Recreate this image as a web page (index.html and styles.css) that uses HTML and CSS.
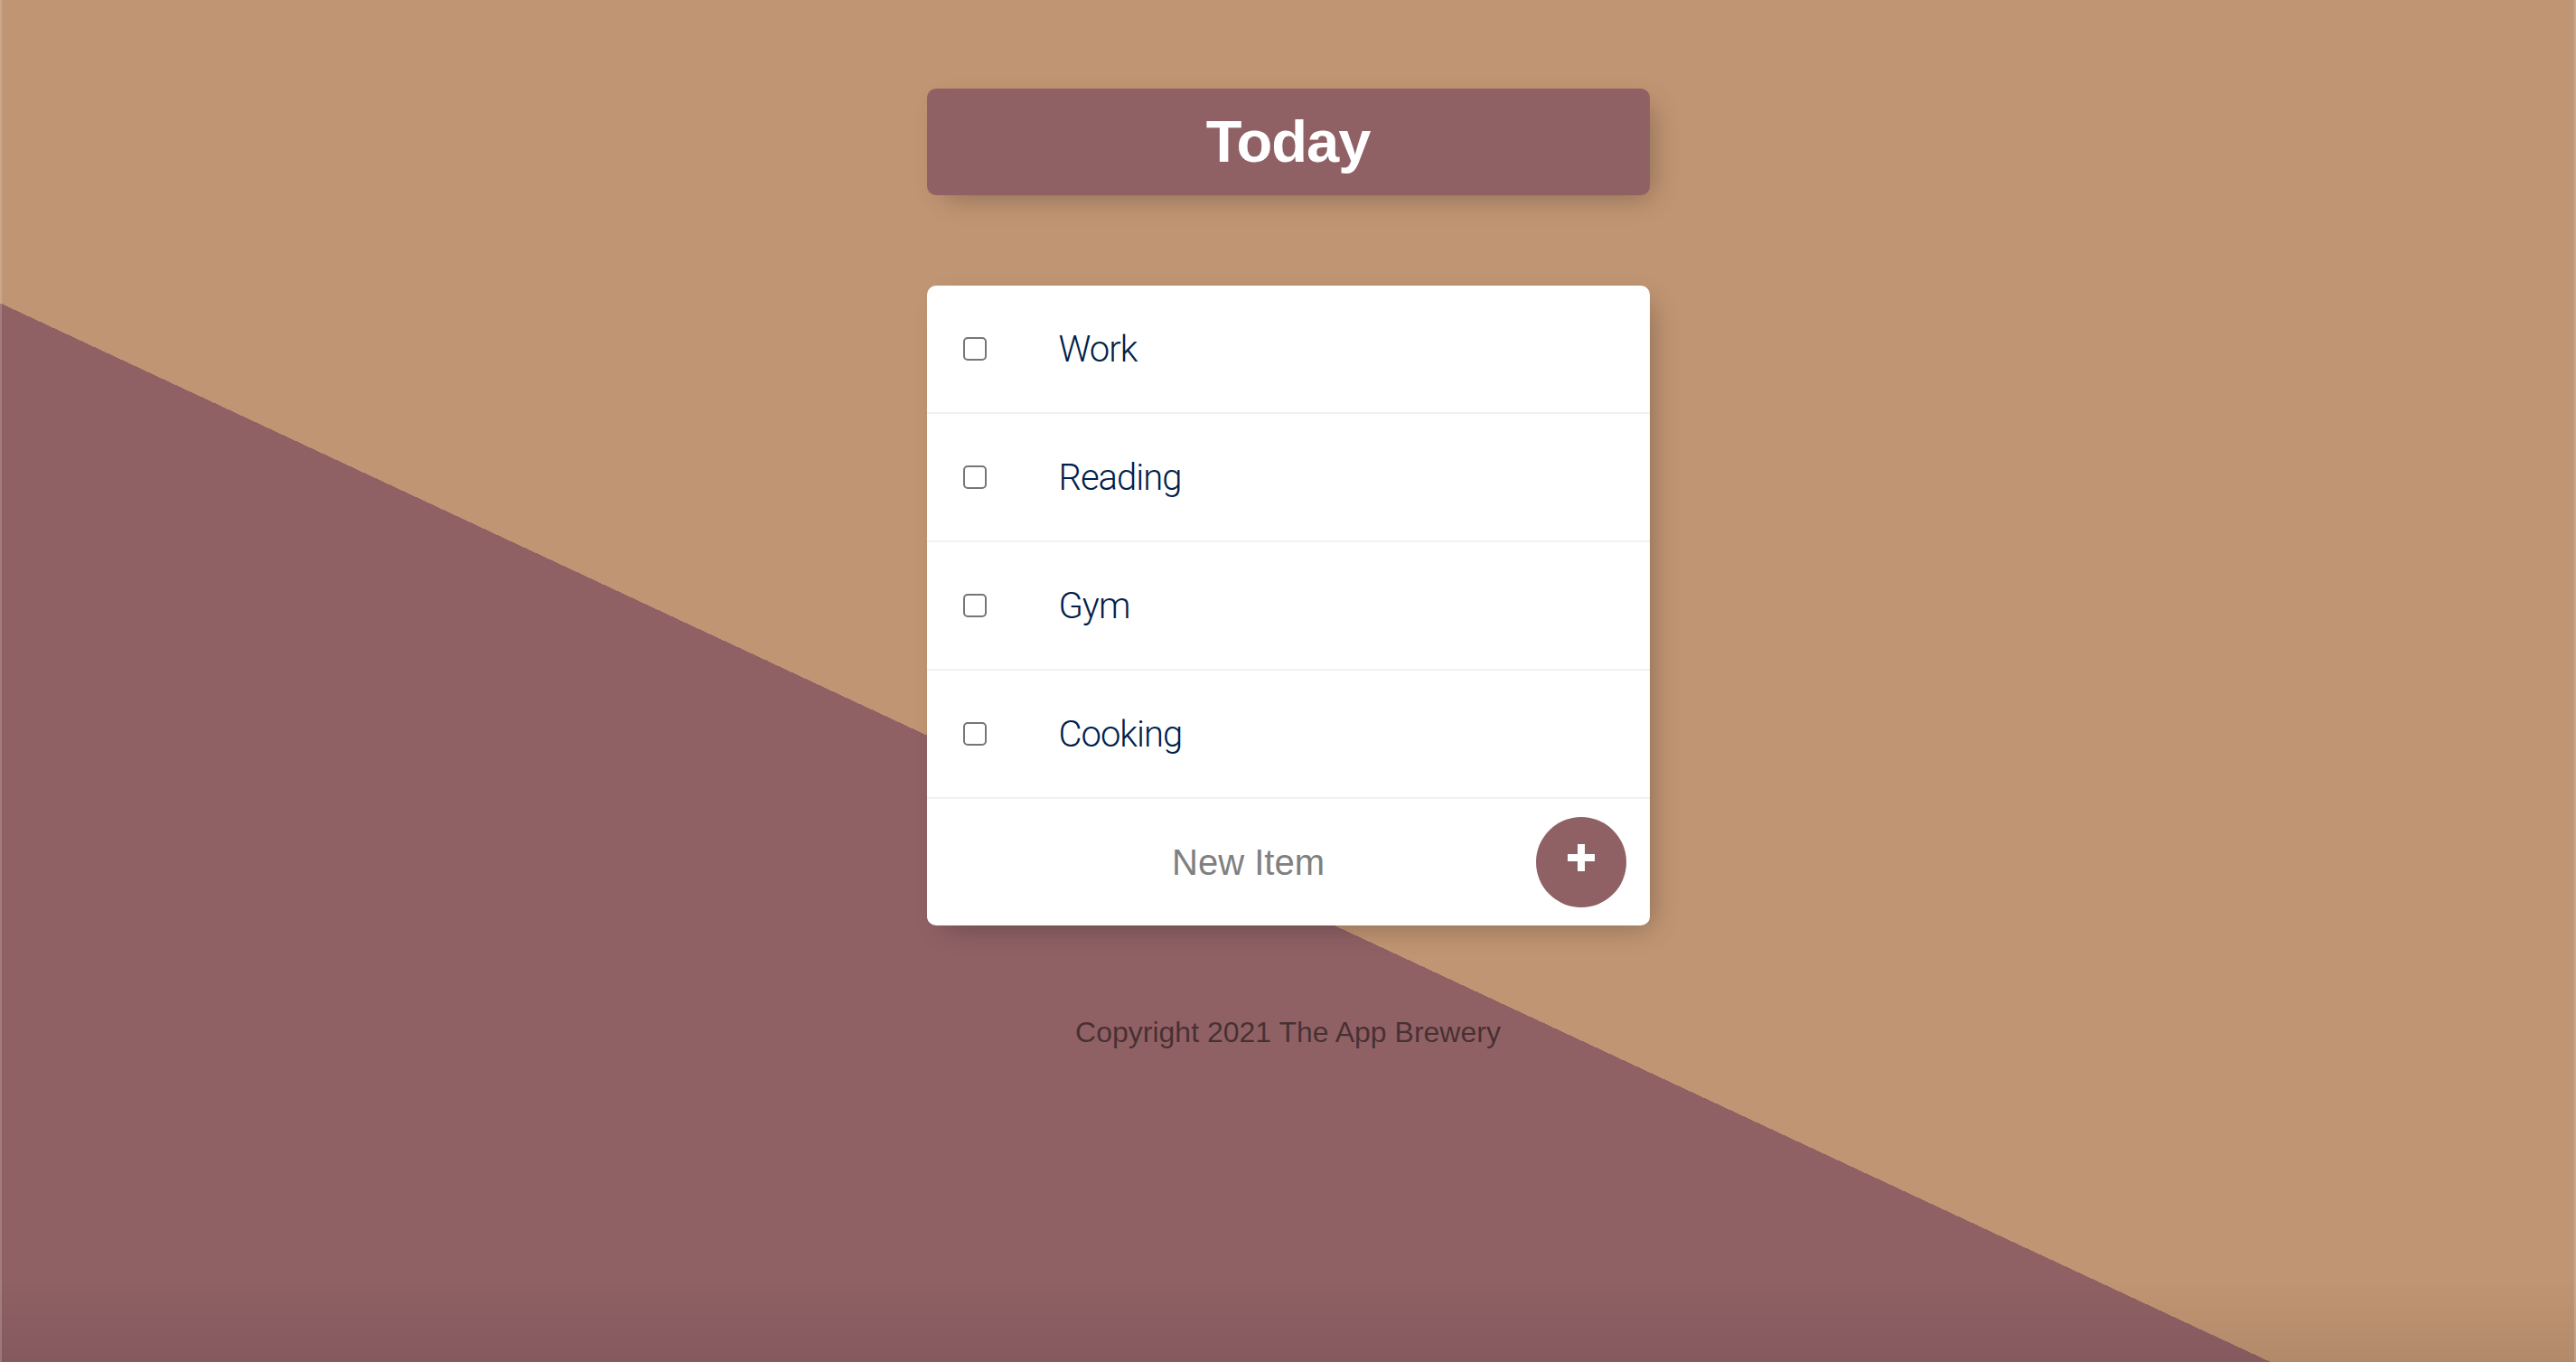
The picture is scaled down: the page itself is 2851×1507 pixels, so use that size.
FILE: index.html
```html
<!DOCTYPE html>
<html lang="en">
<head>
<meta charset="utf-8">
<title>To-Do List</title>
<link rel="stylesheet" href="styles.css">
</head>
<body>
<main class="page">
  <div class="box heading">
    <h1 class="title">Today</h1>
  </div>
  <div class="box list">
    <div class="item">
      <input class="check" type="checkbox">
      <p class="label">Work</p>
    </div>
    <div class="item">
      <input class="check" type="checkbox">
      <p class="label">Reading</p>
    </div>
    <div class="item">
      <input class="check" type="checkbox">
      <p class="label">Gym</p>
    </div>
    <div class="item">
      <input class="check" type="checkbox">
      <p class="label">Cooking</p>
    </div>
    <form class="item new-item">
      <input class="new-input" type="text" name="newItem" placeholder="New Item" autocomplete="off">
      <button class="add-btn" type="button" aria-label="Add">
        <svg class="plus" width="30" height="30" viewBox="0 0 30 30" aria-hidden="true">
          <rect x="0" y="11" width="30" height="8" fill="#fff"/>
          <rect x="11" y="0" width="8" height="30" fill="#fff"/>
        </svg>
      </button>
    </form>
  </div>
  <footer class="footer">Copyright 2021 The App Brewery</footer>
</main>
</body>
</html>
```
FILE: styles.css
```css
html,
body {
  height: 100%;
}

body {
  margin: 0;
  overflow: hidden;
  background-color: #C09573;
  background-image: linear-gradient(25deg, #8F6165 50%, #C09573 50%);
  background-size: 100% 2000px;
  background-repeat: no-repeat;
  font-family: "Liberation Sans", Arial, Helvetica, sans-serif;
}

body::after {
  content: "";
  position: fixed;
  inset: 0;
  pointer-events: none;
  background: linear-gradient(to bottom, rgba(0, 0, 0, 0) calc(100% - 90px), rgba(0, 0, 0, 0.07) 100%);
  box-shadow: inset 2px 0 0 rgba(255, 255, 255, 0.18), inset -2px 0 0 rgba(255, 255, 255, 0.18);
}

.page {
  display: flex;
  flex-direction: column;
  align-items: center;
  padding-top: 98px;
  gap: 100px;
}

.box {
  width: 800px;
  border-radius: 10px;
  box-shadow: 10px 10px 30px -10px rgba(0, 0, 0, 0.3);
}

.heading {
  background-color: #8F6165;
  text-align: center;
}

.title {
  margin: 0;
  padding: 20px;
  font-size: 65px;
  line-height: 78px;
  font-weight: 700;
  color: #fff;
  letter-spacing: -1px;
}

.list {
  background: #fff;
}

.item {
  min-height: 140px;
  display: flex;
  align-items: center;
  border-bottom: 2px solid #F1F1F1;
}

.item:last-child {
  border-bottom: 0;
}

.check {
  appearance: none;
  -webkit-appearance: none;
  box-sizing: border-box;
  width: 26px;
  height: 26px;
  margin: 0 40px;
  border: 2px solid #767676;
  border-radius: 5px;
  background: #fff;
}

.label {
  margin: 0;
  padding-left: 40px;
  font-family: Roboto, "Liberation Sans", Arial, sans-serif;
  font-size: 40px;
  font-weight: 300;
  letter-spacing: -1px;
  color: #00204A;
}

.new-item {
  padding-left: 43px;
  gap: 5px;
}

.new-input {
  width: 626px;
  height: 120px;
  box-sizing: border-box;
  padding: 0;
  border: none;
  background: transparent;
  text-align: center;
  font-family: "Liberation Sans", Arial, sans-serif;
  font-size: 40px;
  color: #333;
  outline: none;
}

.new-input::placeholder {
  color: #808080;
  opacity: 1;
}

.add-btn {
  width: 100px;
  height: 100px;
  padding: 0 0 11px 0;
  border: 0;
  border-radius: 50%;
  background-color: #8F6165;
  display: flex;
  align-items: center;
  justify-content: center;
  box-sizing: border-box;
}

.plus {
  display: block;
}

.footer {
  font-size: 32px;
  color: rgba(0, 0, 0, 0.5);
  text-align: center;
}
```
